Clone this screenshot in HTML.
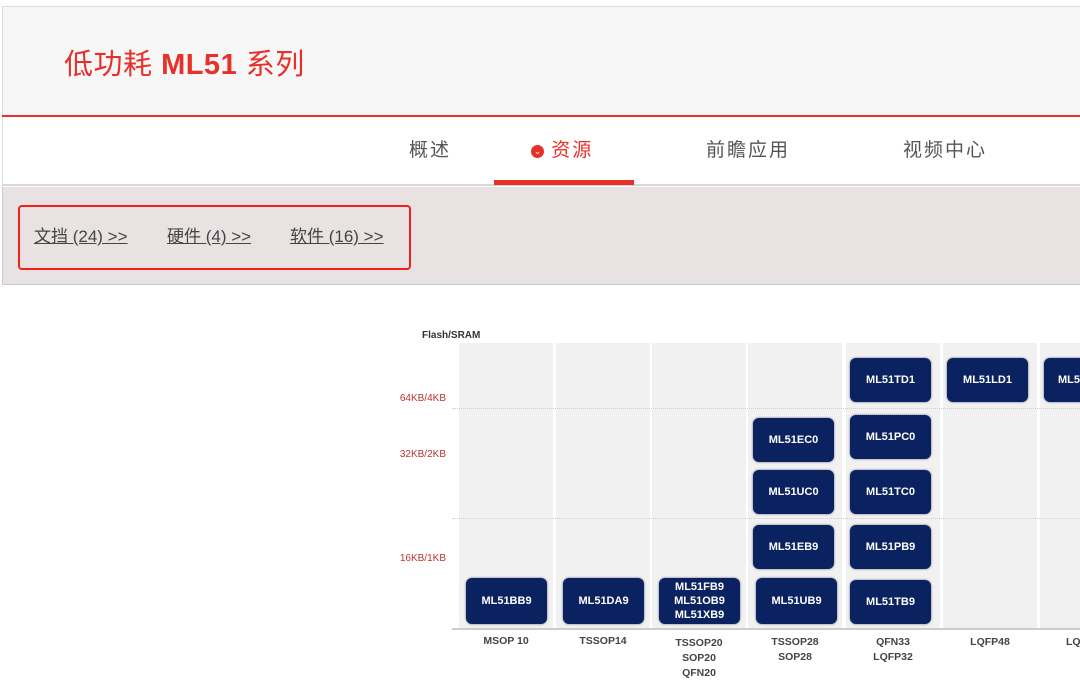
<!DOCTYPE html>
<html><head><meta charset="utf-8"><style>
*{margin:0;padding:0;box-sizing:border-box}
body{width:1080px;height:685px;overflow:hidden;background:#fff;font-family:"Liberation Sans","Noto Sans CJK SC",sans-serif;position:relative}
.abs{position:absolute}
.hdr{left:2px;top:6px;width:1078px;height:110px;background:#f7f7f7;border-top:1px solid #ddd;border-left:1px solid #ddd}
.title{left:64px;top:41px;font-size:29px;color:#e8302a;letter-spacing:0.5px}
.redline{left:2px;top:115px;width:1078px;height:2px;background:#e8302a}
.nav{left:2px;top:117px;width:1078px;height:69px;background:#fff;border-left:1px solid #ddd;border-bottom:2px solid #d8d8d8}
.ni{top:135px;font-size:19px;color:#555;letter-spacing:2px}
.sub{left:2px;top:187px;width:1078px;height:98px;background:#e8e2e2;border-left:1px solid #ccc;border-bottom:1px solid #ccc}
.box{left:18px;top:205px;width:393px;height:65px;border:2.5px solid #f0201a;border-radius:4px}
.lk{top:222px;font-size:17px;color:#444;text-decoration:underline}
.col{top:343px;height:285px;width:94px;background:#f1f1f1}
.grid{left:452px;width:628px;height:1px;border-top:1px dotted #ccc}
.chip{background:#0b2260;color:#fff;border-radius:6px;font-size:11px;font-weight:bold;display:flex;align-items:center;justify-content:center;text-align:center;line-height:14px;box-shadow:0 0 2px #667}
.ylab{font-size:10px;color:#b33;width:60px;text-align:right;left:386px}
.xl{font-size:10.5px;color:#444;font-weight:bold;text-align:center;width:94px;line-height:15px;top:634px}
</style></head><body>
<div class="abs hdr"></div>
<div class="abs title">低功耗 <b style="font-weight:600">ML51</b> 系列</div>
<div class="abs redline"></div>
<div class="abs nav"></div>
<div class="abs ni" style="left:409px">概述</div>
<div class="abs ni" style="left:531px;color:#e8302a"><span style="display:inline-block;width:13px;height:13px;border-radius:50%;background:#e8302a;color:#fff;font-size:9px;line-height:13px;text-align:center;vertical-align:2px;letter-spacing:0">&#8964;</span> 资源</div>
<div class="abs" style="left:494px;top:180px;width:140px;height:5px;background:#e8302a"></div>
<div class="abs ni" style="left:706px">前瞻应用</div>
<div class="abs ni" style="left:903px">视频中心</div>
<div class="abs sub"></div>
<div class="abs box"></div>
<div class="abs lk" style="left:34px">文挡 (24) &gt;&gt;</div>
<div class="abs lk" style="left:167px">硬件 (4) &gt;&gt;</div>
<div class="abs lk" style="left:290px">软件 (16) &gt;&gt;</div>

<div class="abs" style="left:422px;top:330px;font-size:10px;font-weight:bold;color:#333">Flash/SRAM</div>
<div class="abs col" style="left:459px"></div>
<div class="abs col" style="left:556px"></div>
<div class="abs col" style="left:652px"></div>
<div class="abs col" style="left:748px"></div>
<div class="abs col" style="left:846px"></div>
<div class="abs col" style="left:943px"></div>
<div class="abs col" style="left:1040px;width:40px"></div>
<div class="abs grid" style="top:408px"></div>
<div class="abs grid" style="top:518px"></div>
<div class="abs" style="left:452px;top:628px;width:628px;height:2px;background:#ccc"></div>
<div class="abs ylab" style="top:393px">64KB/4KB</div>
<div class="abs ylab" style="top:449px">32KB/2KB</div>
<div class="abs ylab" style="top:553px">16KB/1KB</div>

<div class="abs chip" style="left:466px;top:578px;width:81px;height:46px">ML51BB9</div>
<div class="abs chip" style="left:563px;top:578px;width:81px;height:46px">ML51DA9</div>
<div class="abs chip" style="left:659px;top:578px;width:81px;height:46px">ML51FB9<br>ML51OB9<br>ML51XB9</div>
<div class="abs chip" style="left:753px;top:418px;width:81px;height:44px">ML51EC0</div>
<div class="abs chip" style="left:753px;top:470px;width:81px;height:44px">ML51UC0</div>
<div class="abs chip" style="left:753px;top:525px;width:81px;height:44px">ML51EB9</div>
<div class="abs chip" style="left:756px;top:578px;width:81px;height:46px">ML51UB9</div>
<div class="abs chip" style="left:850px;top:358px;width:81px;height:44px">ML51TD1</div>
<div class="abs chip" style="left:850px;top:415px;width:81px;height:44px">ML51PC0</div>
<div class="abs chip" style="left:850px;top:470px;width:81px;height:44px">ML51TC0</div>
<div class="abs chip" style="left:850px;top:525px;width:81px;height:44px">ML51PB9</div>
<div class="abs chip" style="left:850px;top:580px;width:81px;height:44px">ML51TB9</div>
<div class="abs chip" style="left:947px;top:358px;width:81px;height:44px">ML51LD1</div>
<div class="abs chip" style="left:1044px;top:358px;width:60px;height:44px;justify-content:flex-start;padding-left:14px">ML5</div>

<div class="abs xl" style="left:459px">MSOP 10</div>
<div class="abs xl" style="left:556px">TSSOP14</div>
<div class="abs xl" style="left:652px;top:636px">TSSOP20<br>SOP20<br>QFN20</div>
<div class="abs xl" style="left:748px;top:635px">TSSOP28<br>SOP28</div>
<div class="abs xl" style="left:846px;top:635px">QFN33<br>LQFP32</div>
<div class="abs xl" style="left:943px;top:635px">LQFP48</div>
<div class="abs xl" style="left:1040px;top:635px;width:60px;text-align:left;padding-left:26px">LQ</div>
</body></html>
